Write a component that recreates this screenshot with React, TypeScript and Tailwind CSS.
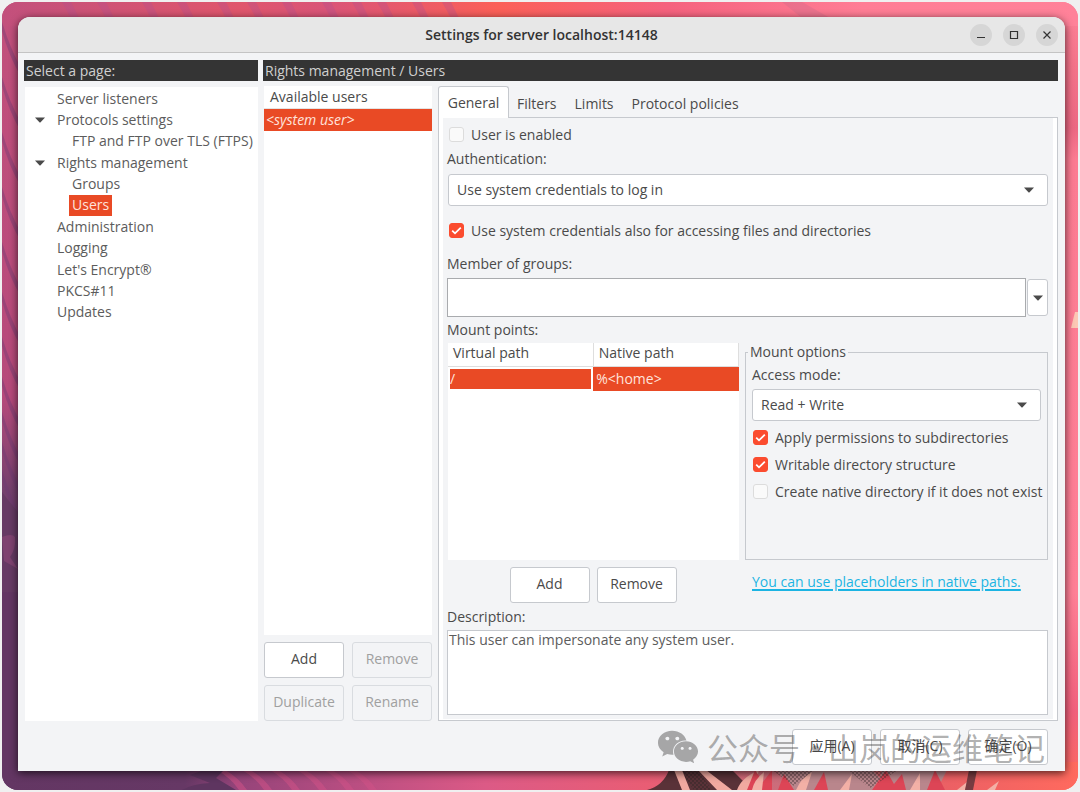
import { useState, type ReactNode } from 'react';
import { clsx } from 'clsx';
import { FaWeixin } from 'react-icons/fa';

const PAGES = [
  { label: 'Server listeners' },
  { label: 'Protocols settings', open: true },
  { label: 'FTP and FTP over TLS (FTPS)', child: true },
  { label: 'Rights management', open: true },
  { label: 'Groups', child: true },
  { label: 'Users', child: true },
  { label: 'Administration' },
  { label: 'Logging' },
  { label: "Let's Encrypt®" },
  { label: 'PKCS#11' },
  { label: 'Updates' },
];

const TABS = ['Filters', 'Limits', 'Protocol policies'];

function Arrow({ className }: { className?: string }) {
  return (
    <svg viewBox="0 0 10 6" className={clsx('h-[6px] w-[10px] fill-[#4a4a4a]', className)} aria-hidden>
      <path d="M0 0.5h10L5.6 5.3a0.9 0.9 0 0 1-1.2 0z" />
    </svg>
  );
}

function Button({ children, disabled }: { children: ReactNode; disabled?: boolean }) {
  return (
    <button
      type="button"
      disabled={disabled}
      className={clsx(
        'h-9 w-20 shrink-0 rounded-[3px] border pb-[3px] text-center',
        disabled ? 'border-[#d9dce0] bg-[#f3f4f6] text-[#a0a0a0]' : 'border-[#c6c9ce] bg-white text-[#4a4a4a]',
      )}
    >
      {children}
    </button>
  );
}

function Check({ label, on, className }: { label: string; on?: boolean; className?: string }) {
  return (
    <label className={clsx('flex h-[21px] items-center gap-[7px] leading-5 whitespace-nowrap', className)}>
      <span className="grid size-[15px] shrink-0">
        <input
          type="checkbox"
          defaultChecked={on}
          className="peer col-start-1 row-start-1 size-[15px] appearance-none rounded-[3px] border border-[#dcdcdc] bg-[#fafafa] checked:border-[#fb4c2f] checked:bg-[#fb4c2f]"
        />
        <svg
          viewBox="0 0 15 15"
          className="pointer-events-none invisible col-start-1 row-start-1 fill-none stroke-white stroke-[1.8] peer-checked:visible"
          aria-hidden
        >
          <path d="M3.2 7.6l2.8 2.7 5.8-5.6" />
        </svg>
      </span>
      {label}
    </label>
  );
}

function Select({ id, value }: { id: string; value: string }) {
  return (
    <div className="grid items-center">
      <select
        id={id}
        className="col-start-1 row-start-1 h-8 w-full appearance-none rounded-[3px] border border-[#c6c9ce] bg-white pr-8 pb-[2px] pl-2"
      >
        <option>{value}</option>
      </select>
      <Arrow className="pointer-events-none col-start-1 row-start-1 mr-[14px] justify-self-end" />
    </div>
  );
}

function WindowButton({ label, children }: { label: string; children: ReactNode }) {
  return (
    <button type="button" aria-label={label} className="grid size-[22px] place-items-center rounded-full bg-[#d6d6d6]">
      <svg viewBox="0 0 12 12" className="size-3 fill-none stroke-[#333] stroke-[1.2]" aria-hidden>
        {children}
      </svg>
    </button>
  );
}

const LEFT_STRIPES = [20, 75, 130, 185, 240, 290, 335, 375, 410, 440, 468];
const TOP_STRIPES = [60, 95, 140, 175, 215, 245, 280, 320, 350, 375, 410, 440];

/** Desktop wallpaper, visible only as a frame around the window. */
function Wallpaper() {
  return (
    <svg
      viewBox="0 0 1076 788"
      preserveAspectRatio="none"
      className="pointer-events-none absolute inset-0 size-full"
      aria-hidden
    >
      <defs>
        <linearGradient id="wpTop">
          <stop offset="0" stopColor="#c2507c" />
          <stop offset="0.22" stopColor="#e0566c" />
          <stop offset="0.3" stopColor="#d95478" />
          <stop offset="0.46" stopColor="#fb6058" />
          <stop offset="0.62" stopColor="#f5627e" />
          <stop offset="0.8" stopColor="#ff7d95" />
          <stop offset="1" stopColor="#ff8299" />
        </linearGradient>
        <linearGradient id="wpLeft" x2="0" y2="1">
          <stop offset="0" stopColor="#c2507c" />
          <stop offset="0.5" stopColor="#b64a7b" />
          <stop offset="0.62" stopColor="#74406d" />
          <stop offset="0.75" stopColor="#633663" />
          <stop offset="1" stopColor="#633663" />
        </linearGradient>
        <linearGradient id="wpRight" x2="0" y2="1">
          <stop offset="0" stopColor="#ff8299" />
          <stop offset="0.08" stopColor="#f4738a" />
          <stop offset="0.16" stopColor="#ec6883" />
          <stop offset="0.2" stopColor="#fc7b92" />
          <stop offset="0.75" stopColor="#ff7f96" />
          <stop offset="0.9" stopColor="#f1607c" />
          <stop offset="1" stopColor="#fd6a5d" />
        </linearGradient>
        <linearGradient id="wpBottom">
          <stop offset="0" stopColor="#633663" />
          <stop offset="0.17" stopColor="#663865" />
          <stop offset="0.22" stopColor="#96447a" />
          <stop offset="0.34" stopColor="#bd4f82" />
          <stop offset="0.45" stopColor="#dc5a86" />
          <stop offset="0.6" stopColor="#e95d74" />
          <stop offset="0.75" stopColor="#c4717c" />
          <stop offset="0.88" stopColor="#ec6064" />
          <stop offset="1" stopColor="#ff6a5e" />
        </linearGradient>
        <pattern id="wpDots" width="4" height="4" patternUnits="userSpaceOnUse">
          <circle cx="1" cy="1" r="0.9" fill="#3c2a2c" />
          <circle cx="3" cy="3" r="0.9" fill="#3c2a2c" />
        </pattern>
      </defs>
      <rect width="24" height="788" fill="url(#wpLeft)" />
      <rect x="1050" width="26" height="788" fill="url(#wpRight)" />
      <rect width="1076" height="24" fill="url(#wpTop)" />
      <rect y="760" width="1076" height="28" fill="url(#wpBottom)" />
      {LEFT_STRIPES.map((y) => (
        <path key={y} d={`M0 ${y}Q8 ${y + 26} 18 ${y + 44}v9Q7 ${y + 34} 0 ${y + 9}z`} fill="#6b3a72" opacity="0.4" />
      ))}
      <path d="M0 490q9 12 16 20v80H0z" fill="#663a64" />
      <path d="M0 535q10-4 13 0 1 12-5 20l8 12-14-8z" fill="#8d4878" opacity="0.6" />
      {TOP_STRIPES.map((x) => (
        <path key={x} d={`M${x} 0h9l8 16h-8z`} fill="#b45090" opacity="0.35" />
      ))}
      <path d="M780 0l20 16h28L800 0z" fill="#c46a8a" opacity="0.3" />
      <path d="M1076 310h-3l-2 8-2 8h7z" fill="#fcc7b4" />
      {[215, 240, 268, 295, 322, 345].map((x) => (
        <path key={x} d={`M${x} 768q14 8 22 20h8q-9-13-22-20z`} fill="#cf5287" opacity="0.55" />
      ))}
      <path d="M180 788q10-6 28-7l-20-8 14-5h20l-8 8 20 12z" fill="#5e3560" />
      <path d="M645 788q16-4 22-20h63l20 20z" fill="#5a3238" />
      <path d="M676 768h20l14 20h-18z" fill="url(#wpDots)" />
      <path d="M672 768h8l8 20h-8zM696 768h8l26 20h-15zM735 788q4-12 22-20l-6 20z" fill="#f1a9a0" />
      <path d="M775 768h95l20 20H790zM880 768h65l-10 20h-60z" fill="#b9868c" />
      <path d="M745 788l8-20 8 12 9-12v20zM776 788l6-16 10 16zM812 788l10-18 4 18zM870 788l14-20 8 14 8-10 4 16zM925 788l8-20 10 20z" fill="#dd4556" />
      <path d="M750 788q2-10 12-18l-2 18zM794 788q5-12 16-18l-6 18zM838 788l12-16-3 16zM908 788l10-17v17zM955 788l10-8-2 8zM985 788l12-9-4 9z" fill="#f3b0a6" />
      <path d="M770 768h42l-20 16zM846 768h50l-28 18z" fill="url(#wpDots)" opacity="0.6" />
      <path d="M967 768h8l-4 20h-8z" fill="#5a3238" opacity="0.8" />
    </svg>
  );
}

function PageTree() {
  const [selected, setSelected] = useState('Users');
  return (
    <nav aria-label="Select a page" className="ml-px flex-1 bg-white pt-px text-[#5c5c5c]">
      <ul className="grid h-[235px] auto-rows-fr">
        {PAGES.map((page) => (
          <li key={page.label} className="flex items-stretch">
            <span className="flex w-[29px] shrink-0 items-center justify-center">
              {page.open && <Arrow />}
            </span>
            <button
              type="button"
              onClick={() => setSelected(page.label)}
              className={clsx(
                'px-[3px] text-left leading-5 whitespace-nowrap',
                page.child && 'ml-[15px]',
                page.label === selected && 'bg-[#e94a25] text-[#ffe3dc]',
              )}
            >
              {page.label}
            </button>
          </li>
        ))}
      </ul>
    </nav>
  );
}

function UserList() {
  return (
    <section className="ml-px flex w-[168px] shrink-0 flex-col">
      <div className="flex-1 bg-white">
        <h3 className="h-[23px] border-b border-[#e4e4e4] pl-[6px] leading-[22px]">Available users</h3>
        <ul>
          <li>
            <button type="button" className="block h-[22px] w-full bg-[#e94a25] pl-[2px] text-left leading-5 text-[#ffe3dc] italic">
              &lt;system user&gt;
            </button>
          </li>
        </ul>
      </div>
      <div className="mt-[7px] grid grid-cols-2 gap-x-2 gap-y-[7px]">
        <Button>Add</Button>
        <Button disabled>Remove</Button>
        <Button disabled>Duplicate</Button>
        <Button disabled>Rename</Button>
      </div>
    </section>
  );
}

function MountTable() {
  return (
    <div className="ml-px bg-white">
      <table className="w-full table-fixed border-collapse text-left">
        <thead>
          <tr className="h-[23px] border-b border-[#dedede]">
            <th className="border-r border-[#dedede] p-0 pl-[5px] align-top font-normal leading-5">Virtual path</th>
            <th className="border-r border-[#dedede] p-0 pl-[5px] align-top font-normal leading-5">Native path</th>
          </tr>
        </thead>
        <tbody>
          <tr className="h-[25px] text-[#ffe3dc]">
            <td className="p-[2px]">
              <span className="block h-5 bg-[#e94a25] leading-5">/</span>
            </td>
            <td className="bg-[#e94a25] p-0 pl-[3px] leading-5">%&lt;home&gt;</td>
          </tr>
        </tbody>
      </table>
    </div>
  );
}

function GeneralTab() {
  return (
    <div role="tabpanel" className="flex flex-1 flex-col border border-t-0 border-[#c6c9ce] bg-white px-[4px] pb-px">
      <div className="flex flex-1 flex-col bg-[#f3f4f6] pt-[6px] pr-[5px] pb-[4px] pl-[4px]">
        <Check label="User is enabled" className="ml-[2px]" />
        <label htmlFor="auth" className="mt-1 mb-[5px] leading-5">
          Authentication:
        </label>
        <div className="ml-px">
          <Select id="auth" value="Use system credentials to log in" />
        </div>
        <Check
          label="Use system credentials also for accessing files and directories"
          on
          className="mt-[14px] ml-[2px]"
        />
        <label htmlFor="groups" className="mt-[13px] mb-1 leading-5">
          Member of groups:
        </label>
        <div className="flex items-center gap-px">
          <input id="groups" type="text" className="h-[39px] min-w-0 flex-1 border border-[#a9abae] bg-white px-2" />
          <button
            type="button"
            aria-label="Choose groups"
            className="grid h-[37px] w-[21px] place-items-center rounded-[3px] border border-[#c6c9ce] bg-white"
          >
            <Arrow />
          </button>
        </div>
        <h3 className="my-[3px] leading-5">Mount points:</h3>
        <div className="grid flex-1 grid-cols-[minmax(0,1fr)_303px] grid-rows-[minmax(0,1fr)_auto] gap-x-[6px] gap-y-[7px]">
          <MountTable />
          <fieldset className="min-w-0 border border-[#c6c9ce] px-[6px]">
            <legend className="-ml-[4px] px-[2px] leading-[18px] whitespace-nowrap">Mount options</legend>
            <label htmlFor="access" className="my-1 block leading-5">
              Access mode:
            </label>
            <Select id="access" value="Read + Write" />
            <div className="mt-[6px] ml-px flex flex-col gap-[6px]">
              <Check label="Apply permissions to subdirectories" on />
              <Check label="Writable directory structure" on />
              <Check label="Create native directory if it does not exist" />
            </div>
          </fieldset>
          <div className="flex justify-center gap-[7px]">
            <Button>Add</Button>
            <Button>Remove</Button>
          </div>
          <p className="pt-[5px] pl-[7px] leading-5">
            <a href="#placeholders" className="text-[#1cb4e3] underline decoration-2 underline-offset-2">
              You can use placeholders in native paths.
            </a>
          </p>
        </div>
        <label htmlFor="description" className="mt-1 mb-[3px] leading-5">
          Description:
        </label>
        <textarea
          id="description"
          defaultValue="This user can impersonate any system user."
          className="h-[85px] resize-none border border-[#c6c9ce] bg-white px-px text-[#5c5c5c] leading-[18px]"
        />
      </div>
    </div>
  );
}

export default function App() {
  return (
    <div className="flex min-h-screen bg-[#f0f0f0] p-[2px] font-['Open_Sans','Noto_Sans_CJK_SC',sans-serif] text-[14px] text-[#4a4a4a]">
      <div className="relative flex flex-1 overflow-hidden rounded-2xl pt-[15px] pr-[13px] pb-[19px] pl-4">
        <Wallpaper />
        <main className="relative flex min-w-0 flex-1 flex-col rounded-t-xl bg-[#f3f4f6] shadow-[0_2px_8px_rgba(0,0,0,0.7)]">
          <header className="grid h-9 grid-cols-[1fr_auto_1fr] items-center rounded-t-xl border-b border-[#c4c4c4] bg-[#e7e7e7] px-[7px]">
            <h1 className="col-start-2 text-[14px] font-semibold text-[#333]">Settings for server localhost:14148</h1>
            <div className="flex justify-end gap-[11px]">
              <WindowButton label="Minimize">
                <path d="M2 8.5h8" />
              </WindowButton>
              <WindowButton label="Maximize">
                <path d="M2.5 2.5h7v7h-7z" />
              </WindowButton>
              <WindowButton label="Close">
                <path d="M2.5 2.5l7 7M9.5 2.5l-7 7" />
              </WindowButton>
            </div>
          </header>

          <div className="flex flex-1 gap-[5px] pt-[7px] pr-[7px] pl-[6px]">
            <div className="flex w-[234px] shrink-0 flex-col">
              <h2 className="mb-[6px] h-[21px] bg-[#343434] pl-[2px] leading-[21px] text-[#d0d0d0]">Select a page:</h2>
              <PageTree />
            </div>
            <div className="flex min-w-0 flex-1 flex-col">
              <h2 className="mb-[5px] h-[21px] bg-[#343434] pl-[2px] leading-[21px] text-[#d0d0d0]">
                Rights management / Users
              </h2>
              <div className="flex flex-1 gap-[6px]">
                <div className="flex">
                  <UserList />
                </div>
                <section className="flex min-w-0 flex-1 flex-col">
                  <div role="tablist" className="flex h-8">
                    <button
                      type="button"
                      role="tab"
                      aria-selected
                      className="w-[71px] rounded-t-[3px] border border-b-0 border-[#c6c9ce] bg-white"
                    >
                      General
                    </button>
                    <div className="flex flex-1 gap-[18px] border-b border-[#c6c9ce] pl-2">
                      {TABS.map((tab) => (
                        <button key={tab} type="button" role="tab" aria-selected={false} className="pt-[3px]">
                          {tab}
                        </button>
                      ))}
                    </div>
                  </div>
                  <GeneralTab />
                </section>
              </div>
            </div>
          </div>

          <footer className="relative flex justify-end gap-2 pt-2 pr-[17px] pb-[6px]">
            <Button>应用(A)</Button>
            <Button>取消(C)</Button>
            <Button>确定(O)</Button>
            <div className="pointer-events-none absolute top-2 right-5 bottom-[6px] flex items-center font-['Noto_Sans_CJK_SC',sans-serif] text-[31px] leading-9 whitespace-nowrap text-[#333]/40">
              <FaWeixin className="mr-2 size-[42px]" aria-hidden />
              <span>公众号</span>
              <span className="w-[28px] text-center">·</span>
              <span>山岚的运维笔记</span>
            </div>
          </footer>
        </main>
      </div>
    </div>
  );
}
